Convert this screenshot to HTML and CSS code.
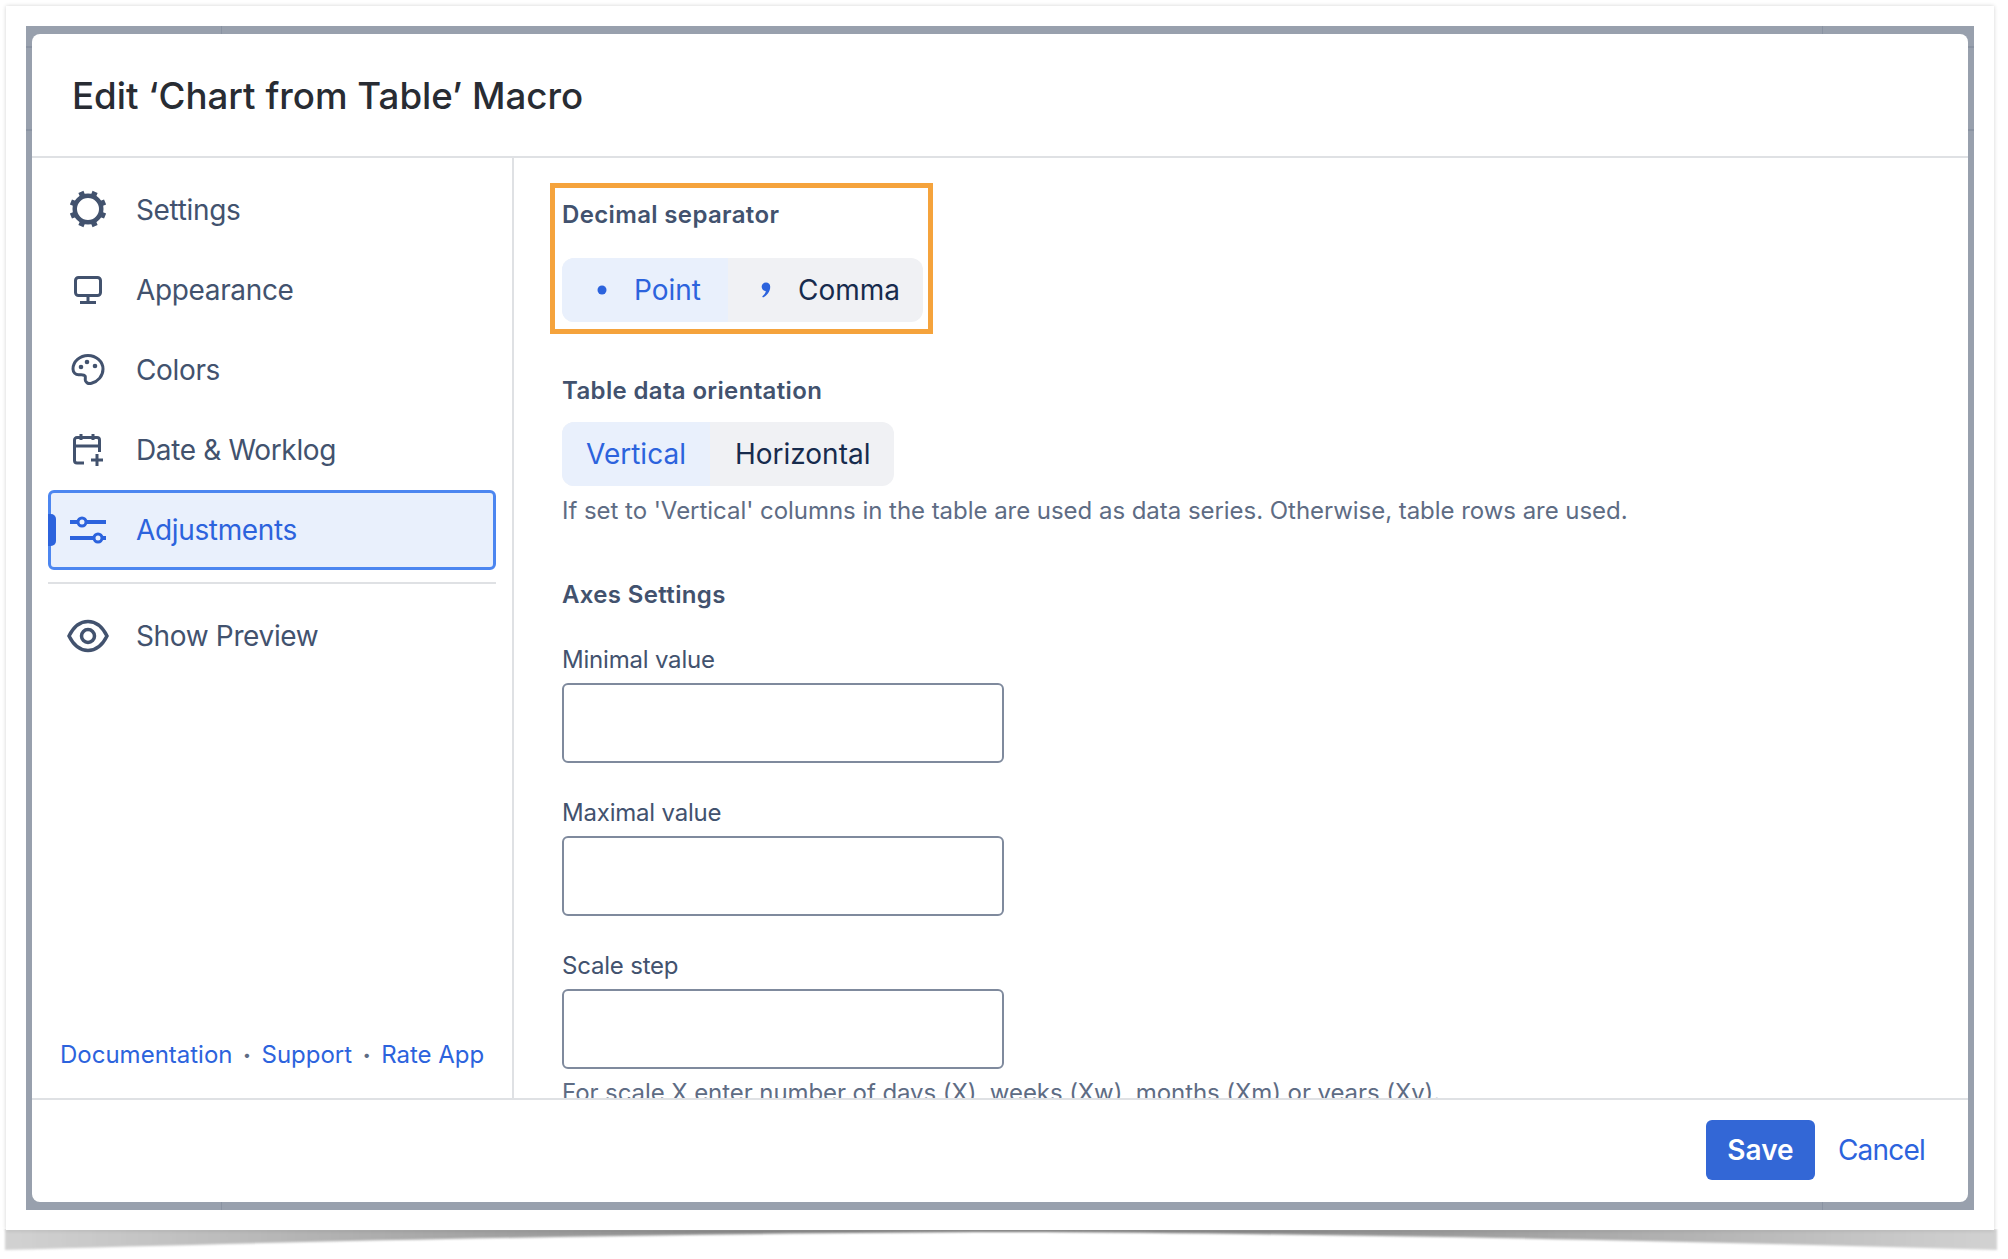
FILE: index.html
```html
<!DOCTYPE html>
<html lang="en">
<head>
<meta charset="utf-8">
<title>Edit Chart from Table Macro</title>
<link rel="stylesheet" href="styles.css">
</head>
<body>
<svg class="curl" width="2008" height="30" viewBox="0 0 2008 30" aria-hidden="true">
  <defs>
    <linearGradient id="curlg" x1="0" x2="1" y1="0" y2="0">
      <stop offset="0" stop-color="#d2d2d2"/>
      <stop offset="0.15" stop-color="#b4b4b4"/>
      <stop offset="0.35" stop-color="#8e8e8e"/>
      <stop offset="0.5" stop-color="#808080"/>
      <stop offset="0.65" stop-color="#8e8e8e"/>
      <stop offset="0.85" stop-color="#b4b4b4"/>
      <stop offset="1" stop-color="#d2d2d2"/>
    </linearGradient>
    <filter id="curlb"><feGaussianBlur stdDeviation="0.8"/></filter>
  </defs>
  <path d="M5 0H1997V21C1700 12 1300 4 1004 3C700 4 300 12 5 21Z" fill="url(#curlg)" filter="url(#curlb)"/>
</svg>
<div class="sheet">
  <div class="backdrop">
    <div class="dialog">
      <header class="dialog-head"><h1 class="title">Edit ‘Chart from Table’ Macro</h1></header>
      <div class="dialog-body">
        <nav class="sidebar">
          <a class="nav-item"><span class="nav-icon"><svg class="icon-gear" width="38" height="38" viewBox="0 0 38 38"><g fill="none" stroke="#42526e"><circle cx="19" cy="19" r="13.250" stroke-width="4.500"/><path stroke-width="5.500" d="M11.920 1.910L13.640 6.070M26.080 1.910L24.360 6.070M11.920 36.090L13.640 31.930M26.080 36.090L24.360 31.930M1.910 11.920L6.070 13.640M1.910 26.080L6.070 24.360M36.090 11.920L31.930 13.640M36.090 26.080L31.930 24.360"/></g></svg></span><span>Settings</span></a>
          <a class="nav-item"><span class="nav-icon"><svg width="30" height="30" viewBox="0 0 30 30"><g fill="none" stroke="#42526e" stroke-width="3"><rect x="2.500" y="2.500" width="25" height="18" rx="3"/><path d="M15 21v6M7 27.500h16"/></g></svg></span><span>Appearance</span></a>
          <a class="nav-item"><span class="nav-icon"><svg width="34" height="34" viewBox="0 0 34 34"><path d="M17 2.500C9 2.500 2 8.500 2 16c0 3.500 2.500 6 6 5.800 2.500-.2 5-.5 6 1 1 1.500-.3 3.200.5 5 1 2 3.500 3.200 6 2.500C27 28.500 32 23 32 16 32 8.500 25 2.500 17 2.500Z" fill="none" stroke="#42526e" stroke-width="3"/><g fill="#42526e"><circle cx="10" cy="14" r="2.300"/><circle cx="16" cy="9" r="2.300"/><circle cx="24" cy="13" r="2.300"/></g></svg></span><span>Colors</span></a>
          <a class="nav-item"><span class="nav-icon"><svg width="32" height="34" viewBox="0 0 32 34"><g fill="none" stroke="#42526e" stroke-width="3"><path d="M12 30H5a2.500 2.500 0 0 1-2.500-2.500V7A2.500 2.500 0 0 1 5 4.500h20A2.500 2.500 0 0 1 27.500 7v12M2.500 13h25M9 1v6M21 1v6M25 21v12M19 27h12"/></g></svg></span><span>Date &amp; Worklog</span></a>
          <a class="nav-item nav-active"><span class="nav-icon"><svg width="38" height="30" viewBox="0 0 38 30"><g fill="none" stroke="#2c63dd" stroke-width="4"><path d="M1 7h7M18 7h19M1 23h23M34 23h3"/><circle cx="13" cy="7" r="4" stroke-width="3"/><circle cx="29" cy="23" r="4" stroke-width="3"/></g></svg></span><span>Adjustments</span></a>
          <div class="nav-rule"></div>
          <a class="nav-item"><span class="nav-icon"><svg width="42" height="34" viewBox="0 0 42 34"><path d="M2 17C7 7 13 2.500 21 2.500S35 7 40 17C35 27 29 31.500 21 31.500S7 27 2 17Z" fill="none" stroke="#42526e" stroke-width="3.500"/><circle cx="21" cy="17" r="6.500" fill="none" stroke="#42526e" stroke-width="3.500"/></svg></span><span>Show Preview</span></a>
          <div class="side-links"><a class="link">Documentation</a><span class="dot">•</span><a class="link">Support</a><span class="dot">•</span><a class="link">Rate App</a></div>
        </nav>
        <main class="content">
          <section class="highlight">
            <div class="group-label">Decimal separator</div>
            <div class="segments seg-first">
              <div class="seg seg-on seg-point"><svg width="10" height="10" viewBox="0 0 10 10"><circle cx="5" cy="5" r="4.500" fill="#2c63dd"/></svg><span>Point</span></div>
              <div class="seg seg-comma"><svg width="10" height="16" viewBox="0 0 10 16"><path d="M5 0.500a4.200 4.200 0 0 1 4.200 4.500C9.200 9.500 6 13.500 2 15.500L1.200 14.500C3.500 12.500 4.500 11 4.800 9A4.200 4.200 0 0 1 5 .5Z" fill="#2c63dd"/></svg><span>Comma</span></div>
            </div>
          </section>
          <div class="group-label label-orient">Table data orientation</div>
          <div class="segments seg-second">
            <div class="seg seg-on seg-plain">Vertical</div>
            <div class="seg seg-plain seg-h">Horizontal</div>
          </div>
          <p class="help help-orient">If set to 'Vertical' columns in the table are used as data series. Otherwise, table rows are used.</p>
          <div class="group-label label-axes">Axes Settings</div>
          <label class="field-label label-min">Minimal value</label>
          <input class="field" type="text">
          <label class="field-label">Maximal value</label>
          <input class="field" type="text">
          <label class="field-label">Scale step</label>
          <input class="field" type="text">
          <p class="help help-scale">For scale X enter number of days (X), weeks (Xw), months (Xm) or years (Xy).</p>
        </main>
      </div>
      <footer class="dialog-foot">
        <button class="save">Save</button>
        <a class="cancel">Cancel</a>
      </footer>
    </div>
  </div>
</div>
</body>
</html>
```
FILE: styles.css
```css
* { box-sizing: border-box; }
html, body { margin: 0; height: 100%; }
body {
  position: relative;
  background: #fff;
  font-family: Inter, "Liberation Sans", sans-serif;
  color: #42526e;
  overflow: hidden;
}
.curl { position: absolute; left: 0; top: 1229px; }
.sheet {
  position: relative;
  margin: 6px;
  width: 1988px;
  height: 1224px;
  padding: 20px;
  background: #fff;
  box-shadow: 0 0 4px rgba(0, 0, 0, .18);
}
.backdrop {
  height: 1184px;
  padding: 8px 6px;
  background-color: #98a0ad;
  background-image:
    linear-gradient(#8a93a2, #8a93a2),
    linear-gradient(#8a93a2, #8a93a2),
    linear-gradient(#8a93a2, #8a93a2),
    linear-gradient(#8a93a2, #8a93a2);
  background-size: 100% 2px, 100% 2px, 1px 100%, 1px 100%;
  background-position: 0 20px, 0 103px, 195px 0, 1796px 0;
  background-repeat: no-repeat;
}
.dialog {
  display: flex;
  flex-direction: column;
  height: 1168px;
  background: #fff;
  border-radius: 8px;
  overflow: hidden;
}
.dialog-head {
  flex: none;
  height: 124px;
  display: flex;
  align-items: center;
  padding-left: 40px;
  border-bottom: 2px solid #dfe1e4;
}
.title {
  margin: 0;
  font-size: 36.7px;
  font-weight: 500;
  color: #282c33;
}
.dialog-body { flex: 1; display: flex; min-height: 0; }
.sidebar {
  flex: none;
  width: 482px;
  display: flex;
  flex-direction: column;
  padding: 12px 16px 27px;
  border-right: 2px solid #dfe1e4;
}
.nav-item {
  position: relative;
  display: flex;
  align-items: center;
  gap: 24px;
  height: 80px;
  padding-left: 13px;
  border: 3px solid transparent;
  border-radius: 6px;
  font-size: 28px;
  letter-spacing: -0.35px;
  color: #42526e;
}
.nav-icon { flex: none; width: 48px; display: flex; justify-content: center; align-items: center; }
.icon-gear { margin: 0 1px 3px 0; }
.nav-active { background: #e9f0fc; border-color: #4c86f0; color: #2c63dd; }
.nav-active::before {
  content: "";
  position: absolute;
  left: -3px;
  top: 21px;
  width: 8px;
  height: 32px;
  background: #2c63dd;
  border-radius: 0 5px 5px 0;
}
.nav-rule { height: 2px; margin: 12px 0; background: #dfe1e4; }
.side-links {
  margin-top: auto;
  display: flex;
  align-items: center;
  padding-left: 12px;
  font-size: 24px;
  line-height: 32px;
}
.link { color: #2c63dd; }
.dot { width: 29px; text-align: center; font-size: 14px; color: #5e6c84; }
.content {
  flex: 1;
  min-width: 0;
  overflow: hidden;
  padding: 25px 0 0 36px;
}
.highlight {
  width: 383px;
  height: 151px;
  padding: 11px 0 0 7px;
  border: 5px solid #f5a33c;
}
.group-label { font-size: 24px; line-height: 32px; font-weight: 600; letter-spacing: .35px; color: #42526e; }
.segments { display: flex; height: 64px; border-radius: 12px; overflow: hidden; width: fit-content; font-size: 28px; color: #172b4d; background: #f0f1f4; }
.seg-first { margin-top: 27px; }
.seg { display: flex; align-items: center; }
.seg-on { background: #e9f0fc; color: #2c63dd; }
.seg-point { width: 166px; padding-left: 35px; gap: 27px; }
.seg-comma { width: 195px; padding-left: 33px; gap: 27px; }
.seg-plain { padding: 0 24px; }
.seg-h { padding-left: 25px; }
.label-orient { margin: 41px 0 0 12px; }
.seg-second { margin: 15px 0 0 12px; }
.help { margin: 9px 0 0 12px; font-size: 24px; line-height: 32px; color: #5e6c84; white-space: nowrap; letter-spacing: -0.04px; }
.label-axes { margin: 52px 0 0 12px; }
.field-label { display: block; margin: 34px 0 7px 12px; font-size: 24px; line-height: 32px; letter-spacing: -0.2px; color: #42526e; }
.label-min { margin-top: 33px; }
.field {
  display: block;
  margin-left: 12px;
  width: 442px;
  height: 80px;
  border: 2px solid #7f8a9d;
  border-radius: 6px;
  background: #fff;
}
.help-scale { margin-top: 8px; letter-spacing: -0.08px; }
.dialog-foot {
  flex: none;
  height: 104px;
  display: flex;
  align-items: center;
  justify-content: flex-end;
  gap: 23px;
  padding: 0 43px 2px 0;
  border-top: 2px solid #dfe1e4;
}
.save {
  width: 109px;
  height: 60px;
  border: 0;
  border-radius: 6px;
  background: #3367d6;
  color: #fff;
  font: 600 28px Inter, "Liberation Sans", sans-serif;
}
.cancel { font-size: 28px; letter-spacing: -0.8px; color: #2c63dd; }
```
